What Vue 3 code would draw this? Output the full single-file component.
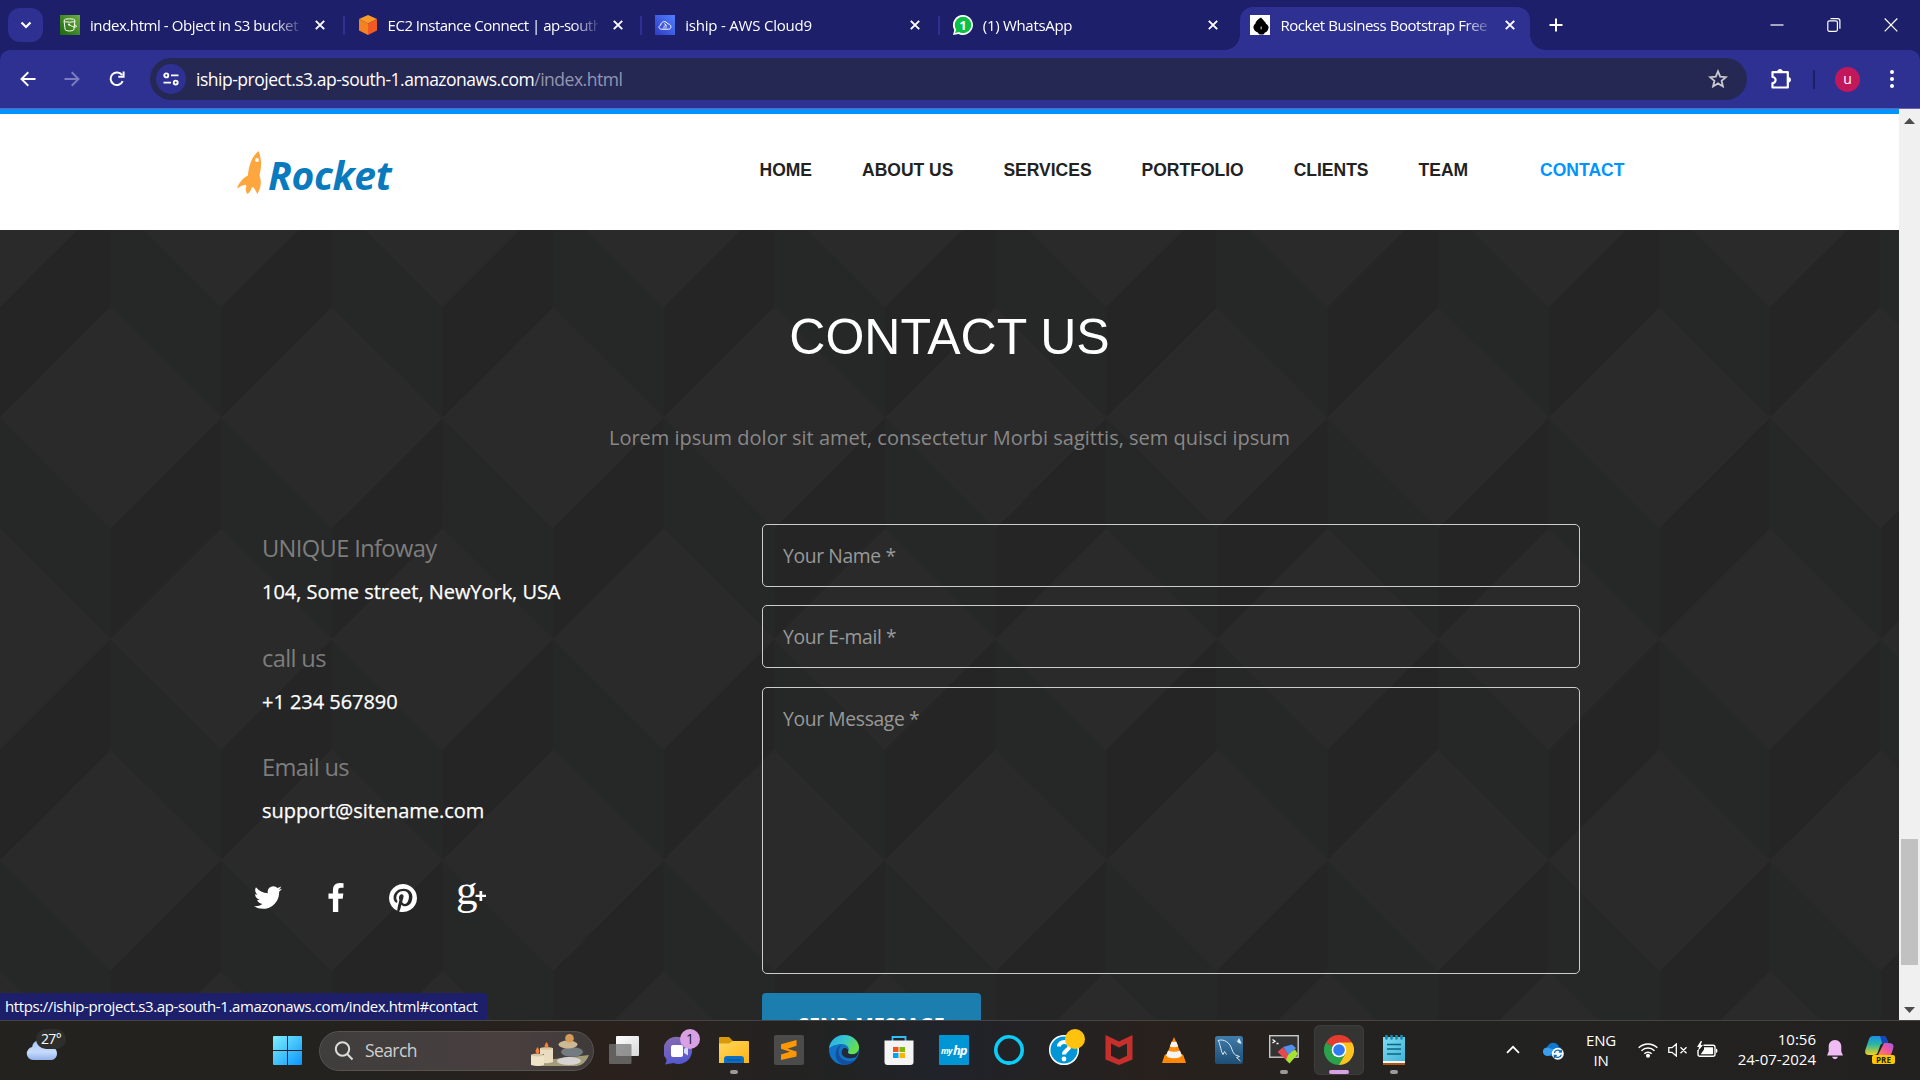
<script setup>
const tabs = [
  { id: 's3', title: 'index.html - Object in S3 bucket', ls: '-0.42px' },
  { id: 'ec2', title: 'EC2 Instance Connect | ap-south', ls: '-0.5px' },
  { id: 'c9', title: 'iship - AWS Cloud9', ls: '-0.2px' },
  { id: 'wa', title: '(1) WhatsApp', ls: '-0.3px' },
  { id: 'rocket', title: 'Rocket Business Bootstrap Free', ls: '-0.46px', active: true },
]
const nav = ['HOME', 'ABOUT US', 'SERVICES', 'PORTFOLIO', 'CLIENTS', 'TEAM', 'CONTACT']
const contacts = [
  { label: 'UNIQUE Infoway', value: '104, Some street, NewYork, USA' },
  { label: 'call us', value: '+1 234 567890' },
  { label: 'Email us', value: 'support@sitename.com' },
]
</script>

<template>
  <div class="screen">
    <header class="strip">
      <div class="tabsearch">
        <svg width="14" height="14" viewBox="0 0 14 14" fill="none" stroke="#fff" stroke-width="2.2"><path d="M2.500 4.500 7 9l4.500-4.500" /></svg>
      </div>
      <div class="tabs">
        <div v-for="(t, i) in tabs" :key="t.id" class="tab" :class="{ active: t.active, sep: i < 3 }">
          <svg v-if="t.id === 's3'" class="fav" viewBox="0 0 20 20"><defs><linearGradient id="s3g" x1="0" y1="1" x2="1" y2="0"><stop offset="0" stop-color="#1b660f" /><stop offset="1" stop-color="#6cae3e" /></linearGradient></defs><rect width="20" height="20" fill="url(#s3g)" /><g fill="none" stroke="#fff" stroke-width="1"><ellipse cx="9.500" cy="5.500" rx="5.500" ry="1.700" /><path d="M4 5.500 5.200 14.800c1 1.600 7.600 1.600 8.600 0L15 5.500M9 9.800c3 1.800 7 3 7.500 1.800.2-1-1.500-1.800-2.200-2.200" /></g><circle cx="9" cy="9.500" r="1" fill="#fff" /></svg>
          <svg v-else-if="t.id === 'ec2'" class="fav" viewBox="0 0 20 20"><path d="m10 0 9 4-9 4.500L1 4z" fill="#fa9a28" /><path d="M1 4l9 4.500V20l-9-4.500z" fill="#f58220" /><path d="M19 4l-9 4.500V20l9-4.500z" fill="#f15a22" /></svg>
          <svg v-else-if="t.id === 'c9'" class="fav" viewBox="0 0 20 20"><defs><linearGradient id="c9g" x1="0" y1="1" x2="1" y2="0"><stop offset="0" stop-color="#2e3cc4" /><stop offset="1" stop-color="#527fff" /></linearGradient></defs><rect width="20" height="20" fill="url(#c9g)" /><g fill="none" stroke="#fff" stroke-width="1"><path d="M6.500 14.200c-3 0-3.300-3.400-.8-4 0-3.800 5.500-5 7-1.300 3.800-.2 4.300 5.200 1 5.300z" /><path d="M9 13.500c-.3-2 .5-3.300 2-3.500M9 8.500l2.200 1.500-.3 3.500" stroke-width=".8" /></g></svg>
          <svg v-else-if="t.id === 'wa'" class="fav" viewBox="0 0 20 20"><path d="M10 0a10 10 0 1 1-4.600 18.900L0 20l1.300-5A10 10 0 0 1 10 0z" fill="#fff" /><circle cx="10" cy="10" r="8.300" fill="#0ac045" /><path d="m2 18 1.500-4 3 3z" fill="#0ac045" /><text x="10" y="14.800" text-anchor="middle" class="wa1">1</text></svg>
          <svg v-else class="fav" viewBox="0 0 20 20"><rect width="20" height="20" fill="#fff" /><path d="M11 2.500c1 1 3 3.500 4.500 5 .5.600 0 1 .8 1.500 2 1 2.800 3 2 5-.6 1.500-1.500 3-3.300 3.500-.8.300-.5 2-2 2h-3c-1.700 0-1.300-1.500-2.200-2-2.300-.6-3.800-2.500-4.300-4.500-.4-2 .8-3.500 2-4.500 0-2 3.500-5.200 5.500-6z" fill="#000" /><path d="M10.700 11.500h.9v2.700h-.9z" fill="#fff" /></svg>
          <span class="ttl" :style="{ letterSpacing: t.ls }">{{ t.title }}</span>
          <svg class="tx" viewBox="0 0 10 10" stroke="#fff" stroke-width="1.900"><path d="m.8.800 8.400 8.400M9.200.8.800 9.200" /></svg>
        </div>
      </div>
      <svg class="plus" width="14" height="14" viewBox="0 0 14 14" stroke="#fff" stroke-width="2"><path d="M7 .5v13M.5 7h13" /></svg>
      <div class="winbtns">
        <svg width="14" height="16" viewBox="0 0 14 16" stroke="#fff" stroke-width="1.200"><path d="M.5 8h13" /></svg>
        <svg width="14" height="16" viewBox="0 0 14 16" fill="none" stroke="#fff" stroke-width="1.200"><rect x=".8" y="3.800" width="9.600" height="10.500" rx="1.500" /><path d="M3.500 1.600h7.200q2.200 0 2.200 2.200v8" /></svg>
        <svg width="14" height="16" viewBox="0 0 14 16" stroke="#fff" stroke-width="1.200"><path d="m.7 1.500 12.600 12.800M13.300 1.500.7 14.300" /></svg>
      </div>
    </header>

    <div class="toolwrap">
      <div class="toolbar">
        <svg class="tb back" viewBox="0 0 16 16" fill="none" stroke="#fff" stroke-width="1.900"><path d="M15.500 8H2M8.300 1.300 1.500 8l6.800 6.700" /></svg>
        <svg class="tb fwd" viewBox="0 0 16 16" fill="none" stroke="#7b7dc0" stroke-width="1.900"><path d="M.5 8H14M7.700 1.300 14.500 8l-6.800 6.700" /></svg>
        <svg class="tb rel" viewBox="0 0 16 16" fill="none" stroke="#fff" stroke-width="2"><path d="M13.700 10.200A6.300 6.300 0 1 1 13 4M14.600.6v5.200H9.300" /></svg>
        <div class="omni">
          <div class="site"><svg width="16" height="14" viewBox="0 0 16 14" fill="none" stroke="#fff" stroke-width="1.900"><circle cx="3.300" cy="3.400" r="2" /><path d="M8 3.400h7.500M.5 10.600H8" /><circle cx="12.700" cy="10.600" r="2" /></svg></div>
          <span class="url">iship-project.s3.ap-south-1.amazonaws.com<i>/index.html</i></span>
          <svg class="star" width="20" height="20" viewBox="0 0 20 20" fill="none" stroke="#c9c9cf" stroke-width="1.800"><path d="m10 2.300 2.200 5.300 5.700.5-4.300 3.700 1.300 5.600-4.900-3-4.900 3 1.300-5.600L2.100 8.100l5.700-.5z" /></svg>
        </div>
        <svg class="ext" width="22" height="22" viewBox="0 0 22 22" fill="none"><path d="M2.500 4.200h15.300v15.300H2.500v-4.300a3 3 0 0 0 0-6.200z" stroke="#fff" stroke-width="2.200" stroke-linejoin="round" /><path d="M7.500 4a2.500 2.500 0 0 1 5 0zM18 9.300a2.500 2.500 0 0 1 0 5z" fill="#fff" stroke="#fff" /></svg>
        <div class="tsep"></div>
        <div class="avatar">u</div>
        <div class="dots"><b></b><b></b><b></b></div>
      </div>
    </div>

    <div class="view">
      <main class="page">
        <div class="sitehead">
          <div class="logo">
            <svg width="32" height="46" viewBox="0 0 32 46"><path d="M22.500 1c-4 3-7.500 9-9.300 16-.8 3.200-1 5-1.300 8.500C7 28 2.500 33 1 38.500c2.500-1.500 5-3.300 8.700-3.800l.8 1.600c-1.500 3-.5 5.700.8 7.700 2-1.300 3.800-3.300 4.300-6.500l1.800-.3c1.700 2 2.800 4.500 3.800 6.800 3.500-5 4.800-12.500 2.200-18.500 2.300-8.500 2.300-17.500-.9-24.500z" fill="#ffa63f" /><circle cx="21" cy="10" r="1.900" fill="#fff" /></svg>
            <span>Rocket</span>
          </div>
          <nav class="nav">
            <a v-for="n in nav" :key="n" :class="{ on: n === 'CONTACT' }">{{ n }}</a>
          </nav>
        </div>

        <section class="contact">
          <svg class="pattern" width="1899" height="790">
            <defs>
              <pattern id="cubes" width="221.25" height="442.500" patternUnits="userSpaceOnUse" patternTransform="translate(0 77.200)">
                <path fill="#252525" d="M110.600 0V442.500H221.250V0z" />
                <path fill="#262827" d="M0 0H110.600V442.500H0z" />
                <path fill="#262827" d="M110.600 0H221.250V110.600z" />
                <path fill="#252525" d="M110.600 0H0V110.600z" />
                <path fill="#262827" d="M110.600 331.900V442.500h110.650V331.900z" />
                <path fill="#252525" d="M0 331.900h110.600V442.500H0z" />
                <path fill="#2a2a2a" d="M110.600.3l110.650 110.300L110.600 220.900 0 110.600zM0 221.600l110.600 110.300L0 442.200zM221.250 221.600V442.200L110.600 331.900z" />
              </pattern>
            </defs>
            <rect width="1899" height="790" fill="url(#cubes)" />
          </svg>
          <h2>CONTACT US</h2>
          <p class="lead">Lorem ipsum dolor sit amet, consectetur Morbi sagittis, sem quisci ipsum</p>
          <div class="cols">
            <div class="info">
              <div v-for="c in contacts" :key="c.label" class="item">
                <h3>{{ c.label }}</h3>
                <p>{{ c.value }}</p>
              </div>
              <div class="social">
                <svg class="tw" viewBox="108 256 1576 1280"><path d="M1684 408q-67 98-162 167 1 14 1 42 0 130-38 259.500t-115.500 248.500-184.500 210.500-258 146-323 54.500q-271 0-496-145 35 4 78 4 225 0 401-138-105-2-188-64.500t-114-159.500q33 5 61 5 43 0 85-11-112-23-185.500-111.500t-73.500-205.500v-4q68 38 146 41-66-44-105-115t-39-154q0-88 44-163 121 149 294.500 238.500t371.500 99.500q-8-38-8-74 0-134 94.500-228.500t228.500-94.500q140 0 236 102 109-21 205-78-37 115-142 178 93-10 186-50z" /></svg>
                <svg class="fb" viewBox="479 0 864 1664"><path d="M1343 12v264h-157q-86 0-116 36t-30 108v189h293l-39 296h-254v759h-306v-759h-255v-296h255v-218q0-186 104-288.500t277-102.500q147 0 228 12z" /></svg>
                <svg class="pi" viewBox="128 128 1536 1536"><path d="M1664 896q0 209-103 385.500t-279.500 279.500-385.500 103q-111 0-218-32 59-93 78-164 9-34 54-211 20 39 73 67.500t114 28.500q121 0 216-68.500t147-188.500 52-270q0-114-59.500-214t-172.500-163-255-63q-105 0-196 29t-154.500 77-109 110.500-67 129.500-21.500 134q0 104 40 183t117 111q30 12 38-20 2-7 8-31t8-30q6-23-11-43-51-61-51-151 0-151 104.500-259.500t273.500-108.500q151 0 235.500 82t84.500 213q0 170-68.500 289t-175.500 119q-61 0-98-43.500t-23-104.500q8-35 26.500-93.500t30-103 11.500-75.500q0-50-27-83t-77-33q-62 0-105 57t-43 142q0 73 25 122l-99 418q-17 70-13 177-206-91-333-281t-127-423q0-209 103-385.500t279.500-279.500 385.500-103 385.500 103 279.500 279.500 103 385.500z" /></svg>
                <svg class="gp" viewBox="0 0 30 30"><text x="-1" y="20.500" class="gg">g</text><path d="M18.500 11.700h4V8h2.700v3.700H29v2.400h-3.800V18h-2.700v-3.900h-4z" /></svg>
              </div>
            </div>
            <form class="form">
              <div class="field">Your Name *</div>
              <div class="field mail">Your E-mail *</div>
              <div class="field area">Your Message *</div>
              <div class="send">SEND MESSAGE</div>
            </form>
          </div>
        </section>
        <div class="status">https://iship-project.s3.ap-south-1.amazonaws.com/index.html#contact</div>
      </main>
      <aside class="scroll">
        <svg width="11" height="6" viewBox="0 0 11 6"><path d="M0 6 5.500 0 11 6z" fill="#4c4c4c" /></svg>
        <div class="thumb"></div>
        <svg width="11" height="6" viewBox="0 0 11 6"><path d="M0 0h11L5.500 6z" fill="#4c4c4c" /></svg>
      </aside>
    </div>

    <footer class="taskbar">
      <div class="weather">
        <svg width="44" height="36" viewBox="0 0 44 36"><defs><linearGradient id="cl" x1="0" y1="0" x2="0" y2="1"><stop offset="0" stop-color="#a9c4f5" /><stop offset=".6" stop-color="#c6dbfb" /><stop offset="1" stop-color="#94b1ea" /></linearGradient></defs><path d="M24 20h5v6h-5z" fill="#f08030" /><path d="M8 33a6.500 6.500 0 0 1-.8-12.900A7.500 7.500 0 0 1 20.500 16c1.500 1.500 2 3 2.300 4.300 4-1.500 9.200 1 9.200 6.200 0 4-2.800 6.500-6 6.500z" fill="url(#cl)" /></svg>
        <span>27°</span>
      </div>
      <svg class="win" viewBox="0 0 29 29"><defs><linearGradient id="wg" x1="0" y1="0" x2="1" y2="1"><stop offset="0" stop-color="#7df0ff" /><stop offset="1" stop-color="#0a95fb" /></linearGradient></defs><path d="M1 0h13v14H0V1q0-1 1-1zM15 0h13q1 0 1 1v13H15zM0 15h14v14H1q-1 0-1-1zM15 15h14v13q0 1-1 1H15z" fill="url(#wg)" /></svg>
      <div class="search">
        <svg class="mag" width="20" height="20" viewBox="0 0 20 20" fill="none" stroke="#dcdcdc" stroke-width="2"><circle cx="8.500" cy="8" r="6.700" /><path d="m13.200 13 5.300 5.500" /></svg>
        <span>Search</span>
        <svg class="stones" width="58" height="34" viewBox="0 0 58 34">
          <path d="M6 27 58 21q-4 10-12 11H4z" fill="#a49c78" />
          <path d="M0 21h13v10q-6 2-13 0z" fill="#efe3c8" /><ellipse cx="6.500" cy="21" rx="6.500" ry="1.500" fill="#d8c8a4" />
          <path d="M9 14h13v14q-6 2-9 1V20H9z" fill="#e9dcc0" /><ellipse cx="15.500" cy="14.500" rx="6.500" ry="1.500" fill="#d8c8a4" />
          <path d="M6.500 13q4 5 0 7-4-2 0-7zM15.500 8q4 5 0 6-4-1 0-6z" fill="#f3803a" />
          <ellipse cx="38" cy="27" rx="12" ry="4" fill="#d5d3d2" /><ellipse cx="41" cy="18" rx="11" ry="4.800" fill="#747b80" /><ellipse cx="37" cy="10.500" rx="9.500" ry="4" fill="#cdb994" /><circle cx="38.500" cy="4.300" r="4.300" fill="#d69a5b" />
        </svg>
      </div>
      <div class="apps">
        <div class="app"><svg viewBox="0 0 30 30"><defs><linearGradient id="tv" x1="0" y1="0" x2="1" y2="1"><stop offset="0" stop-color="#fff" /><stop offset="1" stop-color="#d8d8d8" /></linearGradient></defs><rect x="7" y="1" width="23" height="20" rx="1" fill="url(#tv)" /><rect x="0" y="9" width="22.500" height="20" rx="1" fill="#777" fill-opacity=".75" /></svg></div>
        <div class="app"><svg viewBox="0 0 30 30"><defs><linearGradient id="ch" x1="0" y1="0" x2=".3" y2="1"><stop offset="0" stop-color="#8a6cae" /><stop offset="1" stop-color="#5658d0" /></linearGradient></defs><path d="M14.500 2a13.500 13.500 0 1 1-5 26L1 29.500q2-3 1.300-5.500A13.500 13.500 0 0 1 14.500 2z" fill="url(#ch)" /><rect x="7" y="10" width="12" height="12" rx="2" fill="#fff" /><path d="m20 14 4-2.500v9L20 18z" fill="#d7dcff" /></svg><em class="badge">1</em></div>
        <div class="app"><svg viewBox="0 0 30 30"><defs><linearGradient id="fo" x1="0" y1="0" x2="1" y2="1"><stop offset="0" stop-color="#ffd75e" /><stop offset="1" stop-color="#fbb514" /></linearGradient></defs><path d="M0 3q0-1 1-1h9l4 4v5H0z" fill="#d99a08" /><path d="M0 8.500h10L14 6h15q1 0 1 1v21H0z" fill="url(#fo)" /><path d="M5 28v-4q0-3 3-3h14q3 0 3 3v4z" fill="#0d6fc4" /><path d="M8 25h14" stroke="#0b4f96" /></svg><u></u></div>
        <div class="app"><svg viewBox="0 0 30 30"><rect width="30" height="30" rx="2" fill="#4b4b4b" /><path d="M22.500 5v5.700l-9 3 9 2.900V21.500L7 25v-5.500l9-2.800-9-2.900V9.200z" fill="#ff9800" /></svg></div>
        <div class="app"><svg viewBox="0 0 30 30"><defs><linearGradient id="e1" x1="0" y1="0" x2="1" y2=".5"><stop offset="0" stop-color="#2ba8e8" /><stop offset=".5" stop-color="#35c6d0" /><stop offset="1" stop-color="#68df49" /></linearGradient></defs><circle cx="15" cy="15" r="15" fill="#1173c8" /><path d="M0 13.500C1 5.500 7.300 0 15 0c9 0 15 6.500 15 12.300 0 4.500-3.300 7-6.800 7-3.700 0-5-1.600-4-3 1.800-2.500-.5-7.300-6.200-7.300C6.500 9 1.500 11.500 0 13.500z" fill="url(#e1)" /><path d="M13 9.500c-4 2.500-6 12 3.500 16 4.500 1.800 8.500 0 11-2A14.800 14.800 0 0 1 15 30C8 28 5.500 22 7 16.500c.8-3.500 3-6 6-7z" fill="#124f9e" /><path d="M15 13c3.500 0 4.700 2 4.200 3.500-1 1.500.5 2.800 4 2.800 2 0 4.500-.6 6-3.300-.3 4-1.500 6-3 6.500-5 2-14.500.5-13.500-6 .2-1.500 1.300-3 2.300-3.500z" fill="#222a3a" /></svg></div>
        <div class="app"><svg viewBox="0 0 30 30"><path d="M8.500 7V2h13v5" fill="none" stroke="#35bdf5" stroke-width="1.800" /><path d="M.5 5.500h29V27q0 3-3 3h-23q-3 0-3-3z" fill="#f4f4f4" /><path fill="#f1511b" d="M9 12h5.500v5H9z" /><path fill="#80b900" d="M15.500 12H21v5h-5.500z" /><path fill="#04a3ef" d="M9 18h5.500v5H9z" /><path fill="#fbb400" d="M15.500 18H21v5h-5.500z" /></svg></div>
        <div class="app"><svg viewBox="0 0 30 30"><rect width="30" height="30" rx="1" fill="#0096d6" /><text x="2" y="18.500" class="my">my</text><text x="14" y="20" class="hp">hp</text></svg></div>
        <div class="app"><svg viewBox="0 0 30 30"><circle cx="15" cy="15" r="13.200" fill="none" stroke="#0bcdf9" stroke-width="3.600" /><path d="M11.800 26.200 17.500 26q-2 1.500-2.300 4h-1.700q-.2-2.500-1.700-3.800z" fill="#0bcdf9" /></svg></div>
        <div class="app"><svg viewBox="0 0 30 30"><circle cx="15" cy="15" r="14.300" fill="#0096d6" stroke="#fff" stroke-width="1.500" /><path d="M10 11.500c0-6 10.500-6 10.500-.3 0 4-5.500 4-5.500 8.300" fill="none" stroke="#fff" stroke-width="4" /><circle cx="15" cy="24" r="2.400" fill="#fff" /></svg><em class="dot"></em></div>
        <div class="app"><svg viewBox="0 0 30 30"><path fill="#c5302d" fill-rule="evenodd" d="M1.500 0 15 6.500 28.500 0v24.500L15 30 1.500 24.500zM7 8.500v12.300l8 3.700 8-3.700V8.500l-8 4z" /></svg></div>
        <div class="app"><svg viewBox="0 0 30 30"><path d="M7 19h16l1.500 1.500L27 28H3l2.500-7.500z" fill="#ff8800" /><path d="m15 2 8 19q-8 4-16 0z" fill="#ff8c0a" /><path d="m12.700 6.500-2 5q4.300 1.500 8.600 0l-2-5q-2.300 1-4.600 0zM9 15.800l-1.800 4.500q1 3 7.800 3t7.800-3L21 15.800q-6 2-12 0z" fill="#f4f4f4" /></svg></div>
        <div class="app"><svg viewBox="0 0 30 30"><defs><linearGradient id="my" x1="0" y1="0" x2="0" y2="1"><stop offset="0" stop-color="#3f7cab" /><stop offset="1" stop-color="#1f4e74" /></linearGradient></defs><rect x="1" y="1" width="28" height="28" rx="2.500" fill="url(#my)" /><path d="M4 5.500c6-2 12 2 14 9 .8 2.500 2 4.500 3.500 5.500l4 1.500-3 1 4 3.500M4 5.500c2 2 1.300 4 2.500 6.500.5 2 .8 5 2.500 7.500l1.500-3 2 3" fill="none" stroke="#dce8f2" stroke-width="1" /><path d="m20 3 3 3.500 2-3.500 2 4 .5 2-3-1z" fill="#dce8f2" /></svg></div>
        <div class="app"><svg viewBox="0 0 30 30"><rect x=".7" y=".7" width="28.500" height="21.500" fill="#333" stroke="#c9c9c9" stroke-width="1.400" /><path d="m3.500 4.500 2.500 1.700L3.500 8M7.500 8.500h2" stroke="#fff" stroke-width="1.300" fill="none" /><path d="m8.500 17 5-4.500 3 2.500 2 4 1.500 3-2.500 3.500z" fill="#e5484d" /><path d="m14 12 9-2.500 4 3.500-5 5-3 2-2-4z" fill="#5290ee" /><path d="m19 20 4-3.500 3-2 3 4.500-8.500 9.500-3.500-3.500z" fill="#a6e22e" /></svg><u></u></div>
        <div class="app cur"><svg viewBox="0 0 30 30"><path d="M15 15 2 7.500A15 15 0 0 1 28 7.500z" fill="#e33b2e" /><path d="M15 15V7.500h13A15 15 0 0 1 15 30z" fill="#fcc31e" /><path d="M2 7.500A15 15 0 0 0 15 30l6.500-11.300L15 15z" fill="#2ba14b" /><circle cx="15" cy="15" r="7.300" fill="#fff" /><circle cx="15" cy="15" r="5.800" fill="#2f7cf0" /></svg><u class="wide"></u></div>
        <div class="app"><svg viewBox="0 0 30 30"><defs><linearGradient id="np" x1="0" y1="0" x2="1" y2="1"><stop offset="0" stop-color="#7ddcf2" /><stop offset="1" stop-color="#43b3d8" /></linearGradient></defs><path d="M4 26h22v4H4z" fill="#b0560f" /><path d="M4 25h22v3H4z" fill="#f3f3f3" /><path d="M4 2h22v24H4z" fill="url(#np)" /><path d="M8 9.500h14M8 14h14M8 19h14" stroke="#0b6580" stroke-width="1.700" /><path d="M7.500 0v3.500M12.500 0v3.500M17.500 0v3.500M22.500 0v3.500" stroke="#1c8aa8" stroke-width="2.600" stroke-linecap="round" /></svg><u></u></div>
      </div>
      <div class="tray">
        <svg class="up" width="14" height="9" viewBox="0 0 14 9" fill="none" stroke="#fff" stroke-width="1.700"><path d="m1 7.800 6-6 6 6" /></svg>
        <svg class="od" width="21" height="18" viewBox="0 0 21 18"><path d="M4 14a4.300 4.300 0 0 1 0-8.500C6-.5 14-.8 16 5c3 .5 4 4 3 7l-6 2z" fill="#0f78d0" /><path d="M5 5.500 14 9l-9 5q-5-.5-5-4.500t5-4z" fill="#3aa0ec" /><circle cx="14.800" cy="11.800" r="6" fill="#fff" /><path d="M11.300 11a3.700 3.700 0 0 1 6.800-1M18.300 12.600a3.700 3.700 0 0 1-6.800 1M18.300 7.700v2.500h-2.500M11.300 16v-2.500h2.500" fill="none" stroke="#0f6cbd" stroke-width="1.300" /></svg>
        <div class="lang"><span>ENG</span><span>IN</span></div>
        <svg class="wifi" width="20" height="16" viewBox="0 0 20 16" fill="none" stroke="#fff" stroke-width="1.500"><path d="M.7 5.800a13.200 13.200 0 0 1 18.600 0M3.500 8.800a9.200 9.200 0 0 1 13 0M6.300 11.700a5.300 5.300 0 0 1 7.400 0" /><circle cx="10" cy="13.800" r="1.300" fill="#fff" /></svg>
        <svg class="mute" width="20" height="14" viewBox="0 0 20 14" fill="none" stroke="#fff" stroke-width="1.300"><path d="M.8 4.700H4L8.300 1v12L4 9.300H.8zM12.500 4.200l6 6M18.500 4.200l-6 6" /></svg>
        <svg class="bat" width="21" height="17" viewBox="0 0 21 17"><path d="M6.500 4.200h9.500q2 0 2 2v7q0 2-2 2H3q-2 0-2-2V9" fill="none" stroke="#fff" stroke-width="1.400" /><path d="M7 6.200h8.500q.6 0 .6.600v5.800q0 .6-.6.600H3.700L7 8.500zM19 7.500q1.500.5 1.500 2.200T19 12z" fill="#fff" /><path d="M3.800 0 0 6h2L.8 10.500 6 4H3.800L5 0z" fill="#fff" /></svg>
        <div class="clock"><span>10:56</span><span>24-07-2024</span></div>
        <svg class="bell" width="16" height="20" viewBox="0 0 16 20" fill="#efbcf3"><path d="M8 0c4 0 6.300 3 6.300 6.500v5L16 15.500H0l1.700-4v-5C1.700 3 4 0 8 0zM5 16.800h6q-.8 2.400-3 2.400t-3-2.400z" /></svg>
        <svg class="cop" width="30" height="29" viewBox="0 0 30 29"><defs><linearGradient id="ca" x1="0" y1="0" x2="0" y2="1"><stop offset="0" stop-color="#1b8ee8" /><stop offset=".45" stop-color="#2bb7a0" /><stop offset="1" stop-color="#f5d21c" /></linearGradient><linearGradient id="cb" x1="1" y1="0" x2="0" y2="1"><stop offset="0" stop-color="#a259f0" /><stop offset=".5" stop-color="#f0579c" /><stop offset="1" stop-color="#f88a50" /></linearGradient></defs><path d="M8 1h11q2 0 2.800 3L23 8h-4q-3 0-4 3l-2.500 7q-.8 2-3.500 2H4q-5 0-3.500-5.500L4 4Q5 1 8 1z" fill="url(#ca)" /><path d="M15 1h4q2 0 2.800 3L23 8h-6z" fill="#1646b8" /><path d="M19 8h5q6 0 4 6l-2 6H13z" fill="url(#cb)" /><rect x="7" y="20" width="23" height="9" rx="2" fill="#fdc800" /><text x="18.500" y="27.700" text-anchor="middle" class="pre">PRE</text></svg>
      </div>
    </footer>
  </div>
</template>

<style>
body { margin: 0; background: #222120; overflow: hidden; }
</style>

<style scoped>
* { box-sizing: border-box; }
svg { display: block; flex: none; }
h2, h3, p { margin: 0; font-weight: 400; }
.screen { width: 1920px; height: 1080px; overflow: hidden; display: flex; flex-direction: column; font-family: "Open Sans", "Noto Sans", sans-serif; color: #fff; }

/* tab strip */
.strip { height: 50px; flex: none; background: #1d1f6b; display: flex; align-items: center; padding-left: 8px; }
.tabsearch { width: 35px; height: 34px; border-radius: 12px; background: #2e3192; display: flex; align-items: center; justify-content: center; }
.tabs { display: flex; height: 50px; margin-left: 4px; }
.tab { position: relative; width: 297.600px; height: 50px; display: flex; align-items: center; padding-left: 13px; }
.fav { width: 20px; height: 20px; margin-right: 10px; }
.ttl { width: 210px; overflow: hidden; white-space: nowrap; font-size: 15px; line-height: 24px; flex: none; -webkit-mask-image: linear-gradient(90deg, #000 184px, transparent 214px); mask-image: linear-gradient(90deg, #000 184px, transparent 214px); }
.tx { width: 10px; height: 10px; margin-left: 15px; }
.sep::after { content: ""; position: absolute; right: 0; top: 16px; width: 2px; height: 19px; background: #2e3192; }
.tab.active::before { content: ""; position: absolute; left: 3px; top: 7px; width: 290px; height: 43px; background: #2e3192; border-radius: 13px 13px 0 0; }
.tab.active::after { content: ""; position: absolute; left: -12px; top: 35px; width: 320px; height: 15px; background: radial-gradient(circle at 0 0, transparent 14.500px, #2e3192 15px) 0 0 / 15px 15px no-repeat, radial-gradient(circle at 15px 0, transparent 14.500px, #2e3192 15px) 305px 0 / 15px 15px no-repeat; }
.tab.active > * { position: relative; z-index: 1; }
.wa1 { font: 700 13px "Open Sans", sans-serif; fill: #fff; }
.plus { margin-left: 14px; }
.winbtns { margin-left: auto; display: flex; gap: 43px; padding-right: 22px; }

/* toolbar */
.toolwrap { height: 59px; flex: none; background: #1d1f6b; }
.toolbar { height: 59px; border-radius: 10px 10px 0 0; background: #2e3192; border-bottom: 1px solid #6c62b4; display: flex; align-items: center; padding-left: 20px; }
.tb { width: 16px; height: 16px; }
.fwd { margin-left: 28px; }
.rel { margin-left: 29px; }
.omni { margin-left: 25px; width: 1597px; height: 42px; border-radius: 21px; background: #262854; display: flex; align-items: center; padding-left: 6px; }
.site { width: 30px; height: 30px; border-radius: 50%; background: #2e3192; display: flex; align-items: center; justify-content: center; }
.url { margin-left: 10px; font-size: 17.500px; letter-spacing: -.49px; white-space: nowrap; }
.url i { font-style: normal; color: #9596b0; }
.star { margin-left: auto; margin-right: 19px; }
.ext { margin-left: 23px; }
.tsep { width: 2px; height: 19px; background: #1d1f6b; margin-left: 21px; }
.avatar { width: 25px; height: 25px; border-radius: 50%; background: #c2185b; margin-left: 20px; text-align: center; font-size: 14px; line-height: 23px; }
.dots { margin-left: 30px; display: flex; flex-direction: column; gap: 3px; }
.dots b { width: 4px; height: 4px; border-radius: 50%; background: #fff; }

/* web page */
.view { height: 911px; flex: none; display: flex; }
.page { position: relative; width: 1899px; height: 911px; overflow: hidden; background: #2a2a2a; }
.sitehead { height: 121px; border-top: 5px solid #0094ff; background: #fff; display: flex; padding-left: 236px; }
.logo { display: flex; width: 523.500px; padding-top: 36px; }
.logo span { font: italic 700 39px/49px "Open Sans", sans-serif; color: #0a7abf; letter-spacing: -.3px; }
.nav { display: flex; gap: 50px; padding-top: 44px; }
.nav a { font: 700 17.500px/24px "Liberation Sans", Arial, sans-serif; color: #222; white-space: nowrap; }
.nav .on { color: #0094ff; margin-left: 22px; }
.contact { position: relative; height: 790px; }
.pattern { position: absolute; left: 0; top: 0; z-index: 0; }
.contact > :not(.pattern) { position: relative; z-index: 1; }
.contact h2 { padding-top: 77px; font: 400 50px/60px "Liberation Sans", Arial, sans-serif; text-align: center; }
.lead { margin-top: 56px; font-size: 20px; line-height: 30px; text-align: center; color: #888; }
.cols { display: flex; padding: 71px 0 0 262px; }
.info { width: 500px; padding-top: 2px; }
.item { height: 109.600px; }
.item h3 { font-size: 23.700px; line-height: 44px; color: #7d7d7d; letter-spacing: -.65px; }
.item p { font-size: 20px; line-height: 44px; letter-spacing: -.04px; -webkit-text-stroke: .25px #fff; }
.social { display: flex; align-items: center; margin: 28px 0 0 -8px; height: 30px; }
.social svg { fill: #fff; }
.tw { width: 28px; height: 23px; }
.fb { width: 16px; height: 29px; margin-left: 46px; }
.pi { width: 28px; height: 28px; margin-left: 45px; }
.gp { width: 30px; height: 30px; margin-left: 40px; overflow: visible; }
.gg { font: 400 43px "Liberation Serif", serif; }
.form { width: 818px; }
.field { height: 63px; border: 1px solid #ccc; border-radius: 5px; margin-bottom: 18px; padding: 0 20px; font-size: 19.300px; line-height: 61px; color: #999; letter-spacing: -.35px; }
.mail { margin-bottom: 19px; }
.area { height: 287px; margin-bottom: 19px; }
.send { width: 219px; height: 60px; border-radius: 4px 4px 0 0; background: #1c7eae; text-align: center; font-weight: 700; font-size: 19.500px; line-height: 63px; }
.status { position: absolute; z-index: 3; left: 0; bottom: 0; width: 487px; height: 27px; background: #1d1f6b; border-radius: 0 4px 0 0; padding-left: 5px; font-size: 15px; line-height: 26px; letter-spacing: -.4px; white-space: nowrap; }
.scroll { width: 21px; height: 911px; background: #f0f0f0; display: flex; flex-direction: column; align-items: center; padding-top: 9px; }
.thumb { width: 17px; height: 126px; background: #c1c1c1; margin: 715px 0 42px; }

/* taskbar */
.taskbar { height: 60px; flex: none; border-top: 1px solid #454545; background: linear-gradient(90deg, #23221f 0, #23221f 18%, #2a211d 32%, #212323 44%, #20232a 49%, #28211d 60%, #222220 76%, #22211f 100%); display: flex; align-items: center; }
.weather { position: relative; width: 247px; padding-left: 25px; }
.weather svg { margin-top: -11px; }
.weather span { position: absolute; left: 36px; top: -9px; width: 30px; height: 20px; border-radius: 10px; background: #2e2e2d; font-size: 14px; line-height: 20px; text-align: center; letter-spacing: -.6px; }
.win { width: 29px; height: 29px; margin-left: 26px; }
.search { width: 275px; height: 40px; margin-left: 17px; border-radius: 20px; background: linear-gradient(90deg, #3f3e3d, #493f3f 70%, #3f3b3a); border: 1px solid #57534f; display: flex; align-items: center; padding-left: 14px; font-size: 17.500px; color: #cfcfcf; letter-spacing: -.6px; }
.search span { margin-left: 11px; padding-bottom: 2px; }
.stones { margin-left: auto; margin-right: 4px; }
.apps { display: flex; gap: 5px; margin-left: 5px; margin-top: -1px; }
.app { position: relative; width: 50px; height: 50px; display: flex; align-items: center; justify-content: center; border-radius: 6px; }
.app > svg { width: 30px; height: 30px; }
.cur { background: #343433; box-shadow: inset 0 0 0 1px #3d3d3c; }
.app u { position: absolute; left: 21px; bottom: 1px; width: 8px; height: 4px; border-radius: 2px; background: #9a9a9a; }
.app .wide { left: 15px; width: 20px; background: #d9a0e3; }
.badge, .dot { position: absolute; left: 26px; top: 4px; width: 20px; height: 20px; border-radius: 50%; background: #d9a0e3; color: #222; font: 400 14px/19px "Open Sans", sans-serif; text-align: center; }
.dot { background: #ffc20e; }
.my { font: italic 700 8.500px "Open Sans", sans-serif; fill: #fff; letter-spacing: -.8px; }
.hp { font: italic 700 13px "Open Sans", sans-serif; fill: #fff; letter-spacing: -1px; }
.tray { margin-left: 87px; margin-top: -2px; display: flex; align-items: center; }
.od { margin-left: 23px; margin-top: 2px; }
.lang, .clock { display: flex; flex-direction: column; font-size: 15px; line-height: 20px; letter-spacing: -.2px; }
.lang { width: 40px; margin-left: 17px; align-items: center; }
.wifi { margin-left: 17px; }
.mute { margin-left: 10px; }
.bat { margin-left: 9px; }
.clock { width: 90px; margin-left: 8px; align-items: flex-end; letter-spacing: 0; margin-top: -2px; }
.bell { margin-left: 11px; }
.cop { margin-left: 22px; }
.pre { font: 700 8px "Open Sans", sans-serif; fill: #222; }
</style>
